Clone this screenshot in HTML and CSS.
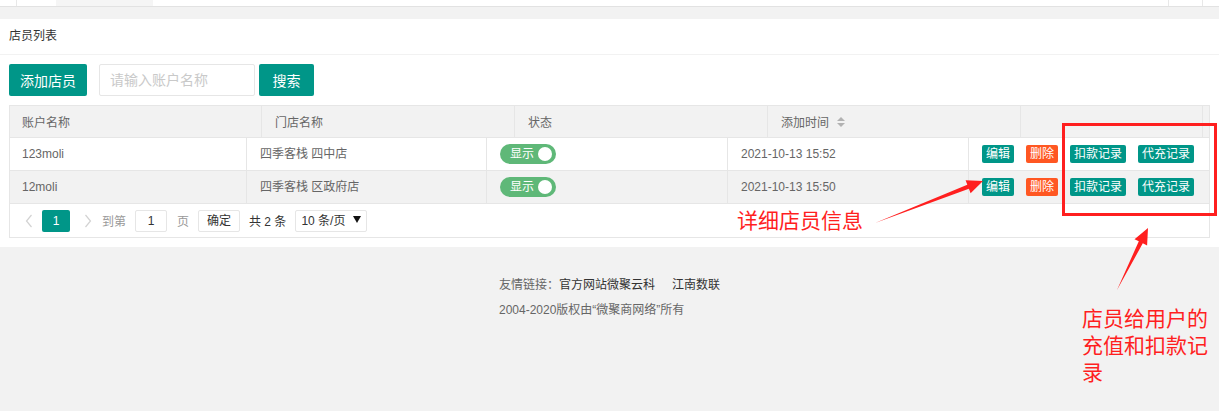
FILE: index.html
```html
<!DOCTYPE html>
<html lang="zh-CN">
<head>
<meta charset="utf-8">
<title>店员列表</title>
<link rel="stylesheet" href="styles.css">
</head>
<body>
<div class="topbar">
  <span class="tb-line"></span>
  <span class="tb-tab"></span>
  <span class="tb-right"></span>
</div>

<div class="card">
  <div class="card-header">店员列表</div>
  <div class="card-body">
    <div class="toolbar">
      <button class="btn btn-add">添加店员</button>
      <input class="search" type="text" placeholder="请输入账户名称">
      <button class="btn btn-search">搜索</button>
    </div>

    <div class="table">
      <div class="thead">
        <div class="th">账户名称</div>
        <div class="th">门店名称</div>
        <div class="th">状态</div>
        <div class="th">添加时间
          <svg class="sort" width="8" height="10" viewBox="0 0 8 10"><path d="M4 0 L8 4 L0 4 Z M0 6 L8 6 L4 10 Z" fill="#b2b2b2"/></svg>
        </div>
        <div class="th"></div>
        <div class="th gutter"></div>
      </div>

      <div class="tr">
        <div class="td">123moli</div>
        <div class="td">四季客栈 四中店</div>
        <div class="td"><span class="switch">显示</span></div>
        <div class="td">2021-10-13 15:52</div>
        <div class="td ops">
          <span class="b">编辑</span><span class="b b-del">删除</span><span class="b">扣款记录</span><span class="b">代充记录</span>
        </div>
      </div>
      <div class="tr tr-alt">
        <div class="td">12moli</div>
        <div class="td">四季客栈 区政府店</div>
        <div class="td"><span class="switch">显示</span></div>
        <div class="td">2021-10-13 15:50</div>
        <div class="td ops">
          <span class="b">编辑</span><span class="b b-del">删除</span><span class="b">扣款记录</span><span class="b">代充记录</span>
        </div>
      </div>

      <div class="pager">
        <svg class="pg-prev" width="8" height="14" viewBox="0 0 8 14"><path d="M6.5 1 L1.5 7 L6.5 13" fill="none" stroke="#d2d2d2" stroke-width="1.2"/></svg>
        <span class="pg-cur">1</span>
        <svg class="pg-next" width="8" height="14" viewBox="0 0 8 14"><path d="M1.5 1 L6.5 7 L1.5 13" fill="none" stroke="#d2d2d2" stroke-width="1.2"/></svg>
        <span class="pg-muted pg-to">到第</span>
        <span class="pg-input">1</span>
        <span class="pg-muted pg-page">页</span>
        <span class="pg-btn">确定</span>
        <span class="pg-count">共 2 条</span>
        <span class="pg-select">10 条/页<svg class="caret" width="8" height="7" viewBox="0 0 8 7"><path d="M0 0 L8 0 L4 7 Z" fill="#111"/></svg></span>
      </div>
    </div>
  </div>
</div>

<div class="footer">
  <div class="footer-inner">
    <div class="f-line">友情链接：<span class="f-link">官方网站微聚云科</span><span class="f-link f-gap">江南数联</span></div>
    <div class="f-line">2004-2020版权由“微聚商网络”所有</div>
  </div>
</div>

<div class="annot">
  <svg class="annot-svg" width="1219" height="411" viewBox="0 0 1219 411">
    <rect x="1063.5" y="124.5" width="152" height="90" fill="none" stroke="#ff1f1f" stroke-width="3"/>
    <polygon points="875,223 968.9,188.8 970.6,193.3 983,181 965.6,180.3 967.3,184.8" fill="#ff1f1f"/>
    <polygon points="1117,290 1142.8,243.3 1147.1,245.4 1148,228 1134.5,239.2 1138.8,241.3" fill="#ff1f1f"/>
  </svg>
  <span class="note note-1">详细店员信息</span>
  <span class="note note-2">店员给用户的充值和扣款记录</span>
</div>
</body>
</html>
```

FILE: styles.css
```css
* { box-sizing: border-box; }

html, body {
  margin: 0;
  padding: 0;
}

body {
  width: 1219px;
  height: 411px;
  overflow: hidden;
  background: #f2f2f2;
  font-family: "Liberation Sans", "Noto Sans CJK SC", sans-serif;
  font-size: 12px;
  color: #666;
  position: relative;
}

/* top bar */
.topbar {
  display: flex;
  height: 7px;
  background: #fff;
  border-bottom: 1px solid #e2e2e2;
  margin-bottom: 12px;
}
.tb-line {
  margin-left: 16px;
  width: 1px;
  background: #e8e8e8;
}
.tb-tab {
  margin-left: 39px;
  width: 97px;
  background: #f5f5f5;
}
.tb-right {
  margin-left: auto;
  margin-right: 16px;
  width: 35px;
  border-left: 1px solid #e8e8e8;
  border-right: 1px solid #e8e8e8;
}

/* card */
.card {
  background: #fff;
}
.card-header {
  height: 36px;
  line-height: 34px;
  padding-left: 9px;
  color: #333;
  border-bottom: 1px solid #f2f2f2;
}
.card-body {
  padding: 9px 9px 9px 9px;
}

/* toolbar */
.toolbar {
  display: flex;
  height: 32px;
  margin-bottom: 9px;
}
.btn {
  height: 32px;
  border: 0;
  border-radius: 2px;
  background: #009688;
  color: #fff;
  font-family: inherit;
  font-size: 14px;
  padding: 0;
  cursor: pointer;
}
.btn-add { width: 78px; }
.btn-search { width: 55px; margin-left: 4px; }
.search {
  margin-left: 12px;
  width: 156px;
  height: 32px;
  border: 1px solid #e6e6e6;
  border-radius: 2px;
  padding: 0 10px;
  font-family: inherit;
  font-size: 14px;
  color: #333;
  outline: none;
}
.search::placeholder { color: #c9c9c9; }

/* table */
.table {
  border: 1px solid #e6e6e6;
}
.thead {
  display: grid;
  grid-template-columns: 252px 253px 253px 253px 182px 1fr;
  height: 32px;
  background: #f2f2f2;
  border-bottom: 1px solid #e6e6e6;
}
.th {
  display: flex;
  align-items: center;
  padding-left: 13px;
  border-right: 1px solid #e6e6e6;
  color: #666;
}
.th:first-child { padding-left: 12px; }
.th.gutter { border-right: 0; }
.sort { margin-left: 8px; }

.tr {
  display: grid;
  grid-template-columns: 237px 240px 241px 241px 1fr;
  height: 33px;
  border-bottom: 1px solid #e6e6e6;
}
.tr-alt { background: #f2f2f2; }
.td {
  display: flex;
  align-items: center;
  padding-left: 13px;
  border-right: 1px solid #e6e6e6;
  color: #666;
  white-space: nowrap;
  line-height: 16px;
}
.td:first-child { padding-left: 12px; }
.td:last-child { border-right: 0; }

.b {
  display: inline-block;
  height: 18px;
  line-height: 18px;
  padding: 0 4px;
  margin-right: 12px;
  background: #009688;
  color: #fff;
  border-radius: 2px;
  font-size: 12px;
}
.b-del { background: #ff5722; }

.switch {
  position: relative;
  display: inline-block;
  width: 56px;
  height: 20px;
  line-height: 20px;
  border-radius: 10px;
  background: #5fb878;
  color: #fff;
  padding-left: 10px;
  font-size: 12px;
}
.switch::after {
  content: "";
  position: absolute;
  right: 4px;
  top: 3px;
  width: 14px;
  height: 14px;
  border-radius: 50%;
  background: #fff;
}

/* pager */
.pager {
  display: flex;
  align-items: center;
  height: 33px;
  padding-left: 15px;
  color: #333;
}
.pg-prev { margin-right: 9px; }
.pg-cur {
  width: 28px;
  height: 22px;
  line-height: 22px;
  text-align: center;
  background: #009688;
  color: #fff;
  border-radius: 2px;
}
.pg-next { margin-left: 14px; }
.pg-muted { color: #999; }
.pg-to { margin-left: 10px; }
.pg-input {
  margin-left: 9px;
  width: 32px;
  height: 22px;
  line-height: 20px;
  text-align: center;
  border: 1px solid #e6e6e6;
  border-radius: 2px;
  color: #333;
}
.pg-page { margin-left: 10px; }
.pg-btn {
  margin-left: 9px;
  width: 42px;
  height: 22px;
  line-height: 20px;
  text-align: center;
  border: 1px solid #e6e6e6;
  border-radius: 2px;
  color: #333;
}
.pg-count { margin-left: 9px; color: #333; }
.pg-select {
  margin-left: 9px;
  width: 72px;
  height: 22px;
  line-height: 20px;
  padding-left: 5px;
  border: 1px solid #e6e6e6;
  border-radius: 2px;
  color: #333;
  display: flex;
  align-items: center;
}
.caret {
  margin-left: auto;
  margin-right: 5px;
  margin-top: -2px;
}

/* footer */
.footer {
  display: flex;
  justify-content: center;
  padding-top: 26px;
}
.footer-inner {
  text-align: left;
}
.f-line {
  line-height: 25px;
  color: #666;
}
.f-link { color: #333; }
.f-gap { margin-left: 17px; }

/* annotations */
.annot {
  position: absolute;
  left: 0;
  top: 0;
  width: 1219px;
  height: 411px;
  pointer-events: none;
}
.annot-svg {
  position: absolute;
  left: 0;
  top: 0;
}
.note {
  position: absolute;
  color: #ff1f1f;
  font-family: "Noto Sans CJK SC", sans-serif;
  font-size: 21px;
}
.note-1 {
  left: 737px;
  top: 206px;
  line-height: 26px;
}
.note-2 {
  left: 1082px;
  top: 304px;
  width: 136px;
  line-height: 27px;
}
```
